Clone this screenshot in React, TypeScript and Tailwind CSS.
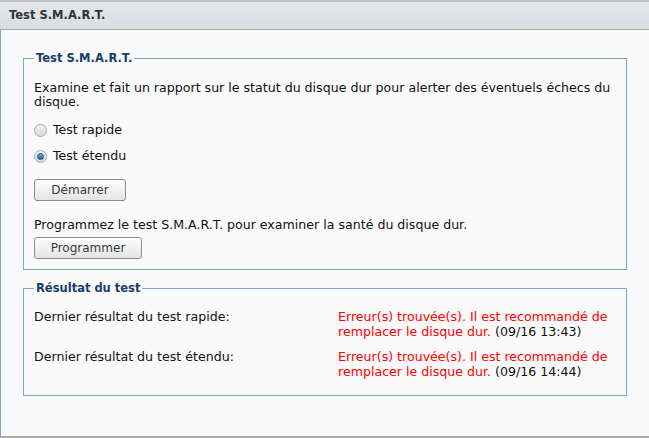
import React from 'react';

const FONT = { fontFamily: '"DejaVu Sans", Verdana, sans-serif' };

function Radio({ checked, label }: { checked?: boolean; label: string }) {
  return (
    <label className="flex h-[26px] items-center gap-[6px] text-[12.6px] text-[#111]">
      <span className="relative inline-flex size-[13px] items-center justify-center rounded-full border border-[#a8a8a8] bg-gradient-to-b from-[#f4f4f4] to-[#d8d8d8]">
        {checked ? (
          <span className="size-[7px] rounded-full border border-[#1d4f7a] bg-gradient-to-b from-[#6fb7ea] to-[#0f5ea0]" />
        ) : null}
      </span>
      {label}
    </label>
  );
}

function Button({ children, width }: { children: React.ReactNode; width: string }) {
  return (
    <button
      className={`${width} h-[22px] rounded-[3px] border border-[#8c8c8c] bg-gradient-to-b from-[#fdfdfd] to-[#e2e4e6] text-[12px] text-[#3a3a3a]`}
    >
      {children}
    </button>
  );
}

function Section({ title, children, className }: { title: string; children: React.ReactNode; className?: string }) {
  return (
    <fieldset className={`mx-[22px] border border-[#7aa7cf] px-[10px] ${className ?? ''}`}>
      <legend className="px-[2px] text-[11.5px] font-bold text-[#173d6e]">{title}</legend>
      {children}
    </fieldset>
  );
}

export default function App() {
  return (
    <div style={FONT} className="flex h-[438px] w-[649px] flex-col bg-[#fafafa]">
      <div className="flex h-[30px] items-center border-t-2 border-b border-t-[#bfc2c5] border-b-[#a6a6a6] bg-gradient-to-b from-[#e3e7ea] to-[#d9dee2] px-[9px]">
        <span className="text-[11.5px] font-bold text-[#333]">Test S.M.A.R.T.</span>
      </div>

      <div className="flex flex-1 flex-col border-l border-b-2 border-l-[#8ba3ba] border-b-[#a9a9a9] pt-[20px]">
        <Section title="Test S.M.A.R.T." className="pb-[10px]">
          <p className="mt-[14px] text-[12.6px] leading-[14px] text-[#111]">
            Examine et fait un rapport sur le statut du disque dur pour alerter des éventuels échecs du disque.
          </p>
          <div className="mt-[8px] flex flex-col">
            <Radio label="Test rapide" />
            <Radio checked label="Test étendu" />
          </div>
          <div className="mt-[8px]">
            <Button width="w-[92px]">Démarrer</Button>
          </div>
          <p className="mt-[17px] text-[12.6px] leading-[14px] text-[#111]">
            Programmez le test S.M.A.R.T. pour examiner la santé du disque dur.
          </p>
          <div className="mt-[3px]">
            <Button width="w-[108px]">Programmer</Button>
          </div>
        </Section>

        <Section title="Résultat du test" className="mt-[10px] pb-[16px]">
          <div className="mt-[11px] grid grid-cols-[304px_1fr] gap-y-[10px] text-[12.6px] leading-[15px] text-[#111]">
            <span>Dernier résultat du test rapide:</span>
            <span>
              <span className="text-[#ff0000]">Erreur(s) trouvée(s). Il est recommandé de remplacer le disque dur.</span>{' '}
              (09/16 13:43)
            </span>
            <span>Dernier résultat du test étendu:</span>
            <span>
              <span className="text-[#ff0000]">Erreur(s) trouvée(s). Il est recommandé de remplacer le disque dur.</span>{' '}
              (09/16 14:44)
            </span>
          </div>
        </Section>
      </div>
    </div>
  );
}
